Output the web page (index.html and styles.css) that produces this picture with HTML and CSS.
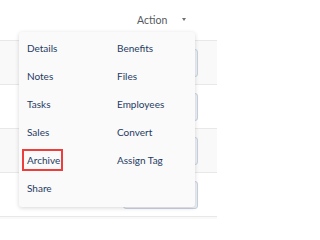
FILE: index.html
```html
<!DOCTYPE html>
<html>
<head>
<meta charset="utf-8">
<link rel="stylesheet" href="styles.css">
</head>
<body>
<div class="page">
  <div class="header">
    <div class="hcell">
      <span class="htext">Action</span>
      <span class="caret"></span>
    </div>
  </div>
  <div class="row alt"><div class="input"></div></div>
  <div class="row"><div class="input"></div></div>
  <div class="row alt"><div class="input"></div></div>
  <div class="row"><div class="input"></div></div>
  <div class="row alt"></div>

  <div class="menu">
    <div class="item">Details</div>
    <div class="item">Benefits</div>
    <div class="item">Notes</div>
    <div class="item">Files</div>
    <div class="item">Tasks</div>
    <div class="item">Employees</div>
    <div class="item">Sales</div>
    <div class="item">Convert</div>
    <div class="item"><span class="hl">Archive</span></div>
    <div class="item">Assign Tag</div>
    <div class="item">Share</div>
  </div>
</div>
</body>
</html>
```
FILE: styles.css
```css
html, body {
  margin: 0;
  padding: 0;
  background: #ffffff;
}
.page {
  position: relative;
  width: 217px;
  height: 219px;
  overflow: hidden;
  font-family: "Lato", "Open Sans", sans-serif;
}
.header {
  height: 40px;
  display: flex;
}
.hcell {
  margin-left: 123px;
  width: 75px;
  box-sizing: border-box;
  padding: 0 12px 0 14px;
  display: flex;
  align-items: center;
  justify-content: space-between;
}
.htext {
  font-size: 10.5px;
  color: #555a60;
}
.caret {
  width: 0;
  height: 0;
  border-left: 2.5px solid transparent;
  border-right: 2.5px solid transparent;
  border-top: 3px solid #707070;
  margin-top: -1px;
}
.row {
  height: 43px;
  border-top: 1px solid #e8e8e8;
  display: flex;
  align-items: center;
  background: #ffffff;
}
.row.alt {
  background: #f9f9f9;
}
.input {
  margin-left: 123px;
  width: 75px;
  height: 28px;
  box-sizing: border-box;
  border: 1px solid #c8d2de;
  border-radius: 3px;
  background: #eef1f6;
}
.menu {
  position: absolute;
  left: 19px;
  top: 32px;
  width: 176px;
  height: 175px;
  box-sizing: border-box;
  padding: 2px 8px 5px;
  background: #fafafa;
  border-radius: 3px;
  box-shadow: 0 1px 4px rgba(0, 0, 0, 0.16);
  display: grid;
  grid-template-columns: 90px 1fr;
  grid-auto-rows: 28px;
}
.item {
  font-size: 10px;
  line-height: 28px;
  color: #1f3a63;
  white-space: nowrap;
}
.hl {
  position: relative;
  display: inline-block;
  line-height: 14px;
}
.hl::after {
  content: "";
  position: absolute;
  left: -5px;
  right: -3px;
  top: -4px;
  bottom: -4px;
  border: 2px solid #ee3d3d;
}
```
